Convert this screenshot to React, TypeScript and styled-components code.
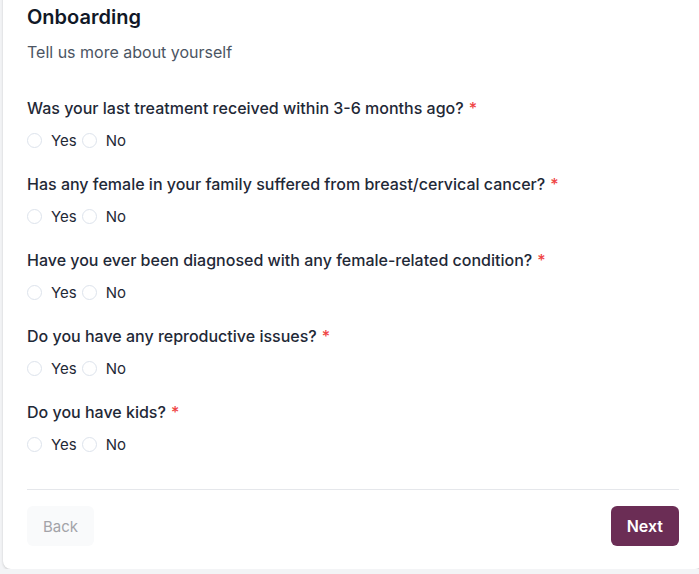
import React from "react";
import styled, { createGlobalStyle } from "styled-components";

const Global = createGlobalStyle`
  html, body { margin: 0; padding: 0; background: #f3f4f6; overflow: hidden; }
  body { font-family: Inter, "Noto Sans", sans-serif; }
  * { box-sizing: border-box; }
`;

const Card = styled.div`
  margin: -21px 0 0 3px;
  width: 700px;
  background: #ffffff;
  border-radius: 8px;
  box-shadow: 0 1px 3px rgba(0, 0, 0, 0.12), 0 1px 2px rgba(0, 0, 0, 0.06);
  padding: 24px 24px 23px 24px;
  display: flex;
  flex-direction: column;
`;

const Title = styled.h1`
  margin: 0;
  font-size: 20px;
  line-height: 28px;
  font-weight: 600;
  color: #111827;
`;

const Subtitle = styled.p`
  margin: 9px 0 0 0;
  font-size: 16px;
  line-height: 24px;
  color: #4b5563;
`;

const Questions = styled.div`
  margin-top: 32px;
  display: flex;
  flex-direction: column;
  gap: 20px;
`;

const Question = styled.div`
  display: flex;
  flex-direction: column;
  gap: 8px;
`;

const Label = styled.div`
  font-size: 16px;
  line-height: 24px;
  font-weight: 500;
  color: #1f2937;
`;

const Required = styled.span`
  color: #ef4444;
  margin-left: 5px;
`;

const Options = styled.div`
  display: flex;
  align-items: center;
  gap: 5px;
  padding-top: 1px;
`;

const Option = styled.label`
  display: flex;
  align-items: center;
  gap: 9px;
  font-size: 15px;
  line-height: 23px;
  color: #1f2937;
`;

const Radio = styled.span`
  width: 15px;
  height: 15px;
  border-radius: 50%;
  border: 1.5px solid #dde3ec;
  background: #ffffff;
`;

const Divider = styled.hr`
  margin: 33px 0 0 0;
  border: 0;
  border-top: 1px solid #e5e7eb;
  width: 652px;
`;

const Footer = styled.div`
  margin-top: 16px;
  width: 652px;
  display: flex;
  justify-content: space-between;
`;

const Button = styled.button<{ $primary?: boolean }>`
  height: 40px;
  padding: 0 16px;
  border: 0;
  border-radius: 6px;
  font-family: inherit;
  font-size: ${(p) => (p.$primary ? 16 : 15)}px;
  font-weight: ${(p) => (p.$primary ? 600 : 400)};
  background: ${(p) => (p.$primary ? "#6b2d55" : "#f9fafb")};
  color: ${(p) => (p.$primary ? "#ffffff" : "#a3a3a8")};
`;

const questions = [
  "Was your last treatment received within 3-6 months ago?",
  "Has any female in your family suffered from breast/cervical cancer?",
  "Have you ever been diagnosed with any female-related condition?",
  "Do you have any reproductive issues?",
  "Do you have kids?",
];

export default function App() {
  return (
    <>
      <Global />
      <Card>
        <Title>Onboarding</Title>
        <Subtitle>Tell us more about yourself</Subtitle>
        <Questions>
          {questions.map((q) => (
            <Question key={q}>
              <Label>
                {q}
                <Required>*</Required>
              </Label>
              <Options>
                <Option>
                  <Radio />
                  Yes
                </Option>
                <Option>
                  <Radio />
                  No
                </Option>
              </Options>
            </Question>
          ))}
        </Questions>
        <Divider />
        <Footer>
          <Button disabled>Back</Button>
          <Button $primary>Next</Button>
        </Footer>
      </Card>
    </>
  );
}
